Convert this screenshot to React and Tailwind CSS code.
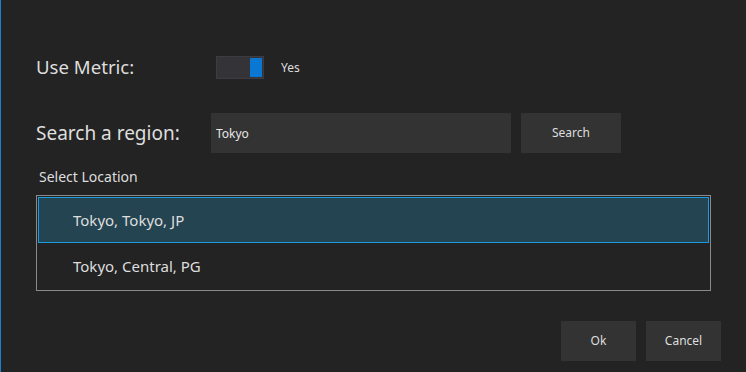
import React, { useState } from 'react';

const locations = ['Tokyo, Tokyo, JP', 'Tokyo, Central, PG'];

const App = () => {
  const [metric, setMetric] = useState(true);
  const [query, setQuery] = useState('Tokyo');
  const [selected, setSelected] = useState(0);

  return (
    <div
      className="w-[746px] h-[372px] bg-[#232323] border-l border-[#1e7fd0] text-[#dedede] overflow-hidden"
      style={{ fontFamily: '"Segoe UI", "Noto Sans", sans-serif' }}
    >
      <div className="pl-[35px] pr-[25px] pt-[56px]">
        <div className="flex items-center h-[23px]">
          <span className="w-[180px] text-[18.6px] leading-none">Use Metric:</span>
          <button
            onClick={() => setMetric(!metric)}
            className="w-[48px] h-[23px] bg-[#333338] border border-[#3c3c42] flex items-center justify-end pr-[1px]"
          >
            <span className="w-[12px] h-[19px] bg-[#0a78d2]" />
          </button>
          <span className="ml-[17px] text-[12px]">{metric ? 'Yes' : 'No'}</span>
        </div>

        <div className="flex items-center mt-[34px] h-[40px]">
          <span className="w-[175px] text-[19px] leading-none">Search a region:</span>
          <input
            value={query}
            onChange={(e) => setQuery(e.target.value)}
            className="w-[300px] h-[40px] bg-[#333333] px-[5px] text-[12px] text-[#e6e6e6] outline-none"
          />
          <button className="ml-[10px] w-[100px] h-[40px] bg-[#333333] text-[12px]">Search</button>
        </div>

        <div className="mt-[15px] pl-[3px] text-[14px] leading-[18px]">Select Location</div>

        <div className="mt-[9px] w-[675px] border border-[#8a8a8a] p-[1px]">
          {locations.map((loc, i) => (
            <div
              key={loc}
              onClick={() => setSelected(i)}
              className={
                i === selected
                  ? 'h-[46px] flex items-center pl-[34px] text-[15px] bg-[#254451] border border-[#1c9be0]'
                  : 'h-[46px] flex items-center pl-[35px] text-[15px]'
              }
            >
              {loc}
            </div>
          ))}
        </div>

        <div className="flex justify-end gap-[10px] mt-[30px]">
          <button className="w-[75px] h-[40px] bg-[#333333] text-[12px]">Ok</button>
          <button className="w-[75px] h-[40px] bg-[#333333] text-[12px]">Cancel</button>
        </div>
      </div>
    </div>
  );
};

export default App;
